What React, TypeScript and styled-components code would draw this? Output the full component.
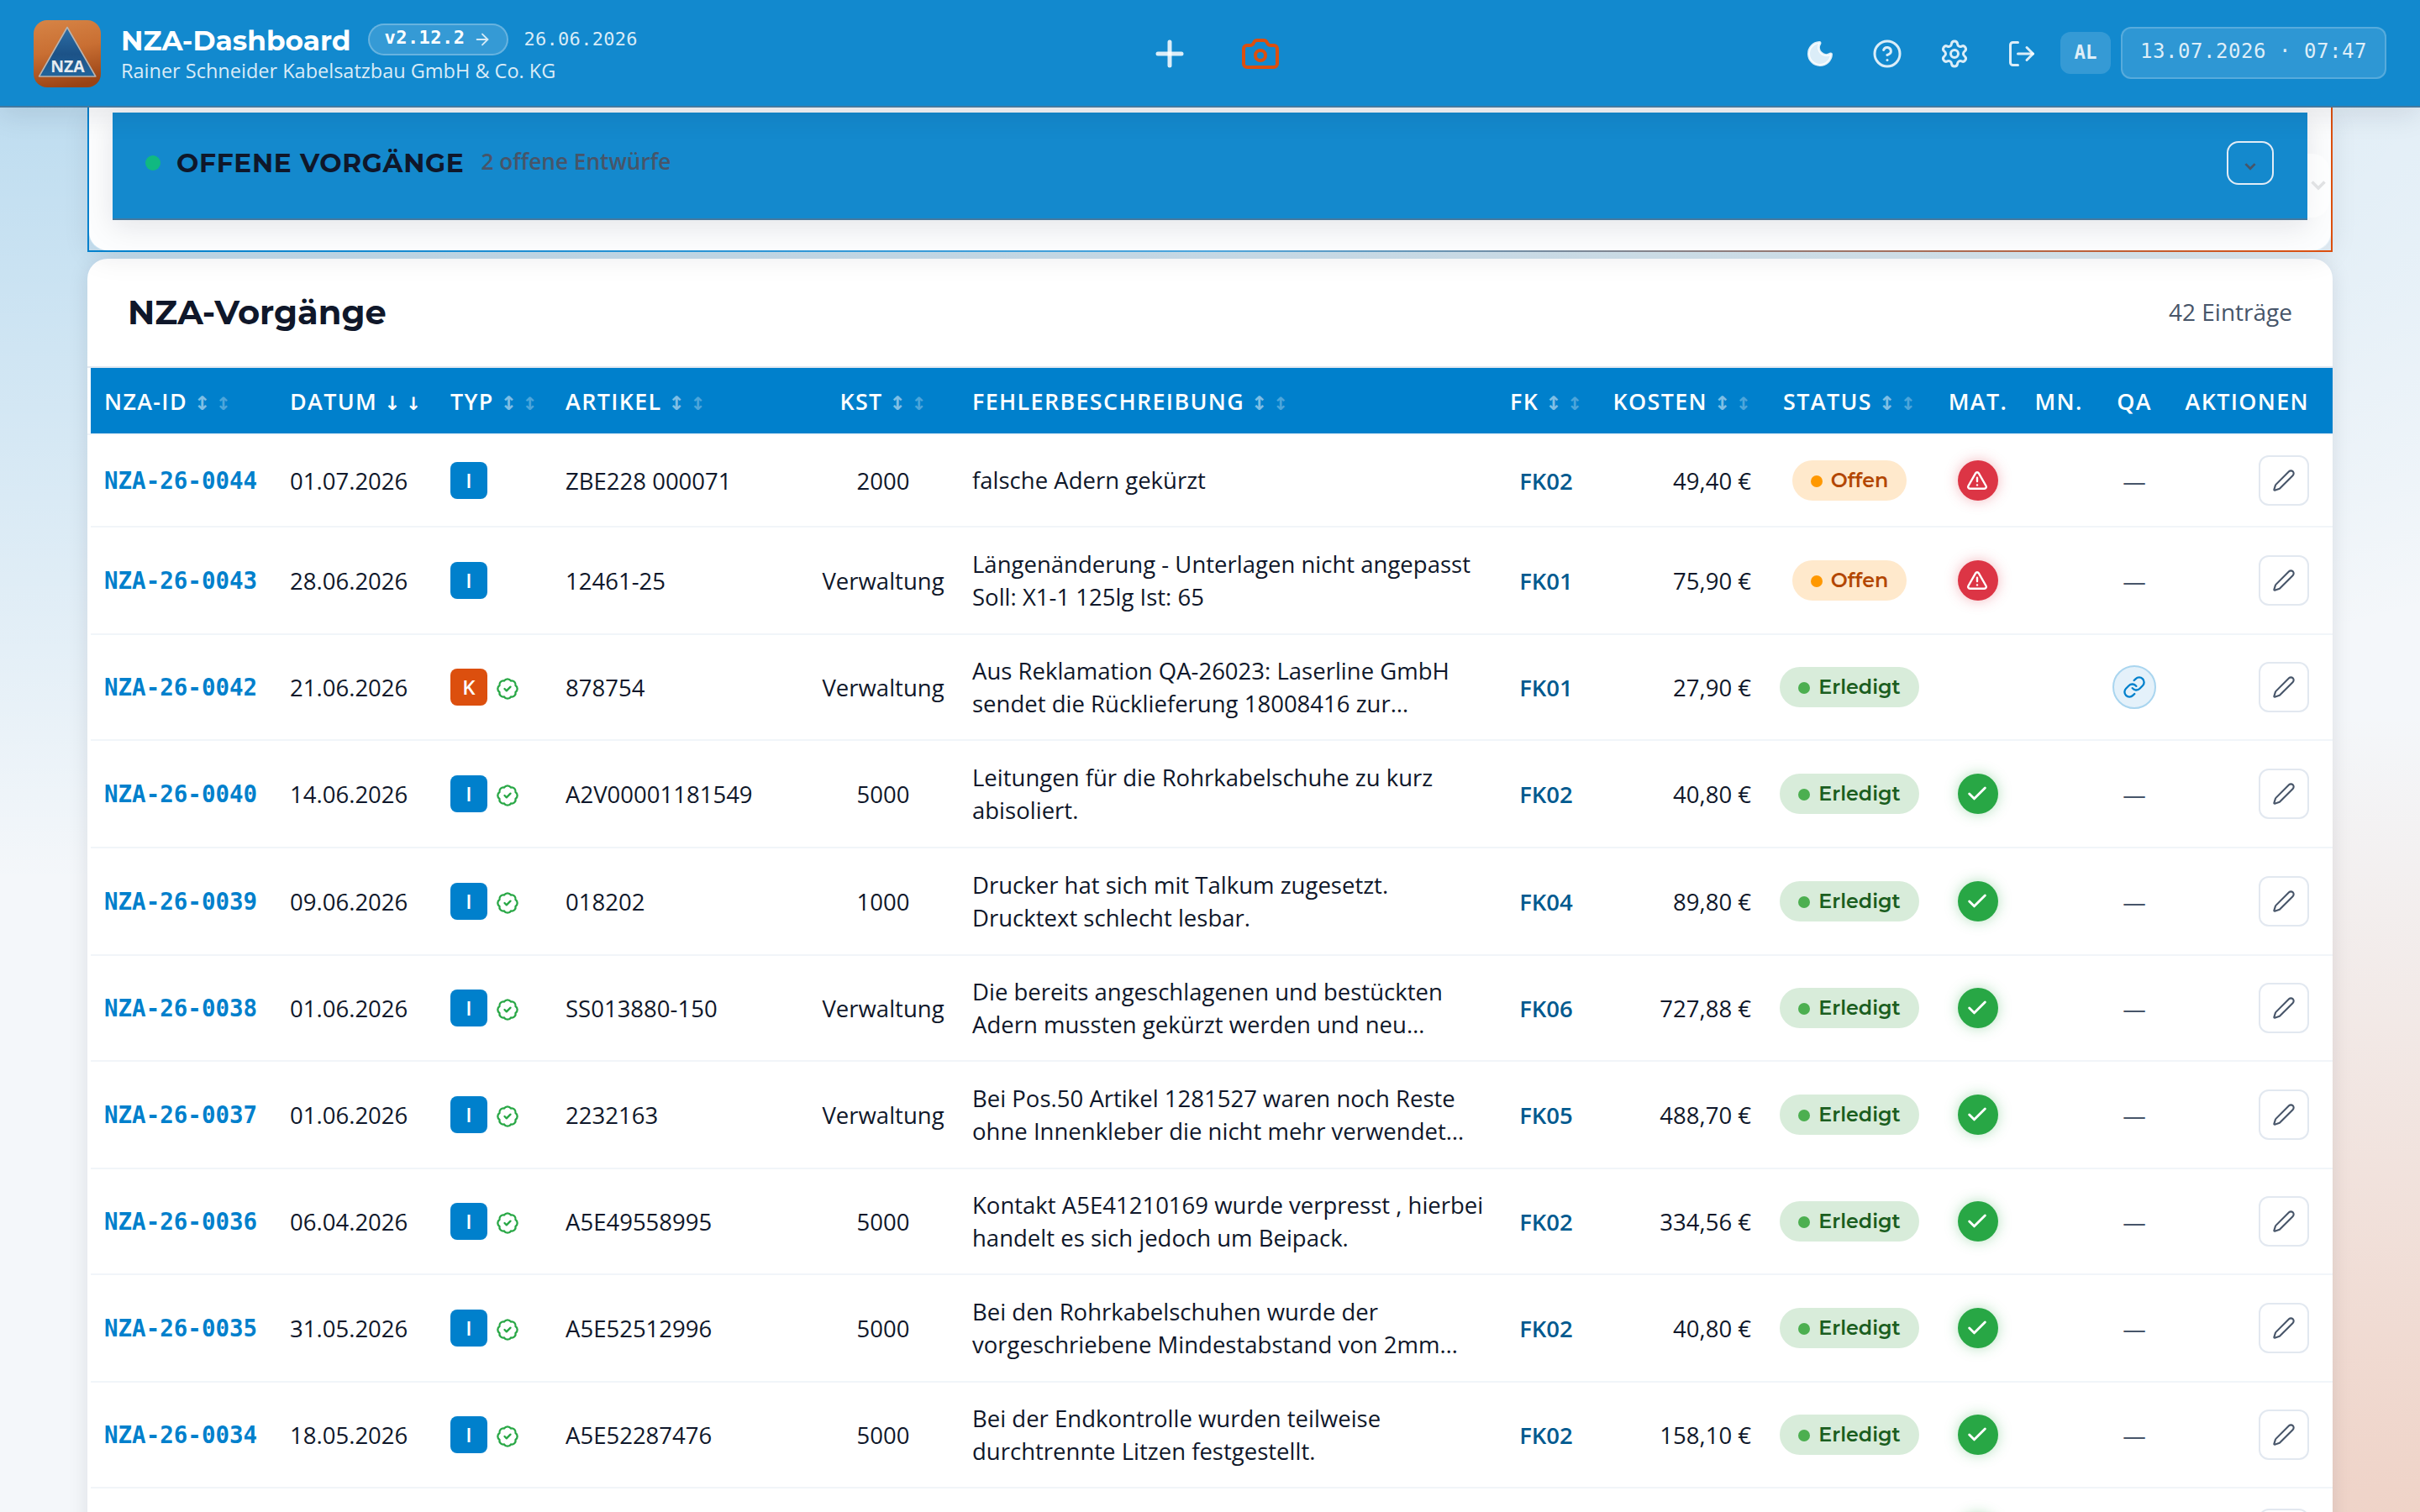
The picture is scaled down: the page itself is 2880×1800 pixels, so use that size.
import React from "react";
import styled, { createGlobalStyle, css } from "styled-components";
import {
  ArrowRight, BadgeCheck, Camera, Check, CircleHelp, LogOut, Moon,
  Pen, Plus, Settings, TriangleAlert, Link,
} from "lucide-react";

const display = `"Montserrat", "Open Sans", sans-serif`;
const body = `"Open Sans", "Noto Sans", sans-serif`;
const mono = `"DejaVu Sans Mono", monospace`;

const Global = createGlobalStyle`
  * { box-sizing: border-box; }
  html, body { margin: 0; height: 1800px; overflow: hidden; }
  body {
    font-family: ${body};
    color: #0f172a;
  }
`;

const Page = styled.div`
  height: 1800px;
  overflow: hidden;
  display: flex;
  flex-direction: column;
  background:
    radial-gradient(4000px 1050px at 0 0, rgba(0, 128, 204, 0.25), rgba(0, 128, 204, 0)),
    radial-gradient(2700px 950px at 100% 100%, rgba(220, 79, 14, 0.215), rgba(220, 79, 14, 0)),
    #f4f7fa;
`;

const TopBar = styled.header`
  flex: none;
  height: 128px;
  padding: 2px 40px 0;
  display: grid;
  grid-template-columns: 1fr auto 1fr;
  align-items: center;
  background: #1289ce;
  border-bottom: 2px solid #44799f;
  box-shadow: 0 8px 32px rgba(15, 23, 42, 0.1);
  position: relative;
  z-index: 2;
`;

const Brand = styled.div`
  display: flex;
  align-items: center;
  gap: 24px;
`;

const BrandText = styled.div`
  display: flex;
  flex-direction: column;
  padding-top: 3px;
`;

const TitleLine = styled.div`
  display: flex;
  align-items: center;
  height: 38px;
`;

const AppTitle = styled.h1`
  margin: 2px 0 0;
  font: 700 32.8px/38px ${display};
  color: #fff;
`;

const VersionPill = styled.span`
  display: flex;
  align-items: center;
  gap: 10px;
  height: 38px;
  margin-left: 20px;
  padding: 0 18px;
  border: 2px solid rgba(255, 255, 255, 0.25);
  border-radius: 19px;
  background: rgba(255, 255, 255, 0.15);
  font: 700 22px/30px ${mono};
  letter-spacing: 0.45px;
  color: #fff;
  svg { opacity: 0.8; }
  span { margin-top: -4px; }
`;

const ReleaseDate = styled.span`
  margin-left: 18px;
  font: 400 22px/30px ${mono};
  letter-spacing: 0.3px;
  color: rgba(255, 255, 255, 0.85);
`;

const Company = styled.div`
  margin-top: -1px;
  font-size: 23.5px;
  line-height: 38px;
  color: rgba(255, 255, 255, 0.85);
`;

const CenterActions = styled.div`
  display: flex;
  gap: 60px;
  margin-left: 12px;
  color: rgba(255, 255, 255, 0.85);
  svg { display: block; }
`;

const RightActions = styled.div`
  display: flex;
  justify-content: flex-end;
  align-items: center;
  color: rgba(255, 255, 255, 0.85);
`;

const IconButton = styled.span`
  width: 80px;
  display: flex;
  justify-content: center;
`;

const UserTag = styled.span`
  margin: 0 0 2px 6px;
  width: 60px;
  height: 50px;
  border-radius: 12px;
  background: rgba(255, 255, 255, 0.15);
  font: 700 22.4px/48px ${mono};
  text-align: center;
`;

const Clock = styled.span`
  margin: 0 0 2px 12px;
  width: 316px;
  height: 62px;
  border: 2px solid rgba(255, 255, 255, 0.2);
  border-radius: 12px;
  background: rgba(255, 255, 255, 0.12);
  font: 400 24px/55px ${mono};
  letter-spacing: 0.55px;
  text-align: center;
`;

const Main = styled.main`
  padding: 0 104px;
  display: flex;
  flex-direction: column;
  gap: 8px;
`;

const DraftFrame = styled.section`
  position: relative;
  z-index: 1;
  height: 172px;
  border: 2px solid;
  border-top: 0;
  border-image: linear-gradient(90deg, #0080cc, #4da6dd 50%, #dc4f0e) 1;
  border-radius: 0 0 24px 24px;
  background: #fcfdfe;
  background-clip: padding-box;
  display: flex;
  padding: 6px 0 0 28px;
  box-shadow: 0 8px 32px rgba(15, 23, 42, 0.08);
`;

const DraftBar = styled.div`
  width: 2612px;
  height: 128px;
  padding: 0 40px 0 39px;
  display: flex;
  align-items: center;
  background: #1489cd;
  border-bottom: 2px solid #44799f;
  box-shadow: 0 8px 32px rgba(15, 23, 42, 0.1);
`;

const Dot = styled.i`
  width: 18px;
  height: 18px;
  border-radius: 50%;
  background: #10b981;
  margin-top: -6px;
`;

const DraftTitle = styled.h2`
  margin: -7px 0 0 19px;
  font: 700 31.2px/36px ${display};
  letter-spacing: 0.7px;
  color: #0f172a;
`;

const DraftCount = styled.span`
  margin: -10px auto 0 20px;
  font-weight: 600;
  font-size: 26.2px;
  color: #475569;
`;

const Toggle = styled.button`
  width: 56px;
  height: 52px;
  padding: 8px 0 0;
  margin-top: -6px;
  border: 2px solid #e2ecf6;
  border-radius: 14px;
  background: none;
  color: #475569;
  display: flex;
  align-items: center;
  justify-content: center;
`;

const SideChevron = styled.span`
  width: 26px;
  height: 76px;
  margin-top: 49px;
  border-radius: 0 20px 20px 0;
  background: rgba(255, 255, 255, 0.5);
  color: #e0e1e3;
  display: flex;
  align-items: center;
  justify-content: center;
`;

const Card = styled.section`
  border-radius: 24px 24px 0 0;
  background: #fff;
  box-shadow: 0 4px 24px rgba(15, 23, 42, 0.1);
`;

const CardHead = styled.div`
  height: 130px;
  padding: 0 48px 2px 48px;
  display: flex;
  align-items: center;
  justify-content: space-between;
  border-bottom: 2px solid #e2e8f0;
`;

const CardTitle = styled.h2`
  margin: 2px 0 0;
  font: 700 40px/48px ${display};
`;

const CardCount = styled.span`
  font-size: 28px;
  color: #475569;
`;

const grid = css`
  display: grid;
  grid-template-columns: 221px 191px 137px 304px 180px 641px 116px 202px 202px 104px 88px 92px 190px;
  align-items: center;
  margin-left: 4px;
`;

const HeadRow = styled.div`
  ${grid}
  height: 78px;
  padding-top: 1px;
  background: #0080cc;
`;

type Align = "left" | "center" | "right";

const Cell = styled.div<{ $align?: Align }>`
  padding: 0 16px;
  display: flex;
  align-items: center;
  justify-content: ${(p) => (p.$align === "center" ? "center" : p.$align === "right" ? "flex-end" : "flex-start")};
  white-space: nowrap;
  &:last-child { padding-right: 28px; }
`;

const HeadCell = styled(Cell)`
  align-items: baseline;
  line-height: 40px;
  color: #fff;
  font-weight: 600;
  font-size: 26.9px;
  letter-spacing: 1.35px;
`;

const Sort = styled.span<{ $second?: boolean; $active?: boolean }>`
  margin-left: ${(p) => (p.$second ? 7 : 8)}px;
  width: ${(p) => (p.$second ? 18 : 19)}px;
  text-align: center;
  letter-spacing: 0;
  font-family: "DejaVu Sans", sans-serif;
  font-size: ${(p) => (p.$second ? 21.3 : 23)}px;
  line-height: 1;
  opacity: ${(p) => (p.$active ? 1 : p.$second ? 0.3 : 0.5)};
`;

const Row = styled.div<{ $h: number }>`
  ${grid}
  height: ${(p) => p.$h}px;
  border-bottom: 2px solid #f1f5f9;
  font-size: 27.52px;
`;

const Body = styled.div`
  border-top: 2px solid #f1f5f9;
`;

const Id = styled.span`
  margin-top: -1px;
  font: 700 27.5px/38px ${mono};
  color: #0080cc;
`;

const TypeBadge = styled.span<{ $k?: boolean }>`
  width: 44px;
  height: 44px;
  border-radius: 8px;
  background: ${(p) => (p.$k ? "#dc4f0e" : "#0080cc")};
  color: #fff;
  font: 600 24px/44px ${body};
  text-align: center;
`;

const Verified = styled(BadgeCheck)`
  margin: 4px 0 0 10px;
  color: #28a745;
`;

const Desc = styled.div`
  padding-top: 1px;
  line-height: 38.7px;
`;

const Code = styled.span`
  font-weight: 600;
  color: #005a8f;
`;

const Status = styled.span<{ $open?: boolean }>`
  height: 48px;
  padding: 0 22px;
  border-radius: 24px;
  display: flex;
  align-items: center;
  gap: 10px;
  font: 600 23.8px/44px ${display};
  color: ${(p) => (p.$open ? "#b34700" : "#1b5e20")};
  background: ${(p) => (p.$open ? "#ffe9cc" : "#d8ecda")};
  i {
    width: 14px;
    height: 14px;
    margin-top: 2px;
    border-radius: 50%;
    background: ${(p) => (p.$open ? "#ff9800" : "#4caf50")};
  }
`;

const Material = styled.span<{ $ok?: boolean }>`
  width: 48px;
  height: 48px;
  border-radius: 50%;
  display: flex;
  align-items: center;
  justify-content: center;
  padding-right: 2px;
  color: #fff;
  background: ${(p) => (p.$ok ? "#28a745" : "#dc3545")};
  box-shadow: 0 0 16px ${(p) => (p.$ok ? "rgba(40,167,69,.35)" : "rgba(220,53,69,.35)")};
`;

const QaLink = styled.span`
  width: 52px;
  height: 52px;
  border: 2px solid #a9d5ef;
  border-radius: 50%;
  background: #e4f1fa;
  color: #0080cc;
  display: flex;
  align-items: center;
  justify-content: center;
`;

const Dash = styled.span`
  color: #475569;
`;

const EditButton = styled.button`
  width: 60px;
  height: 60px;
  padding: 0;
  border: 2px solid #e2e8f0;
  border-radius: 12px;
  background: #fff;
  color: #475569;
  display: flex;
  align-items: center;
  justify-content: center;
`;

const Caret = ({ w, h }: { w: number; h: number }) => (
  <svg width={w} height={h} viewBox="0 0 18 12" fill="none" stroke="currentColor" strokeWidth="3.600">
    <path d="M1.500 1.500 L9 9 L16.500 1.500" />
  </svg>
);

const Logo = () => (
  <svg width="80" height="80" viewBox="0 0 80 80">
    <defs>
      <linearGradient id="copper" x1="0.3" y1="0" x2="0.5" y2="1">
        <stop offset="0" stopColor="#d58244" />
        <stop offset="0.45" stopColor="#c96f33" />
        <stop offset="1" stopColor="#994214" />
      </linearGradient>
      <linearGradient id="steel" x1="0" y1="0" x2="0" y2="1">
        <stop offset="0" stopColor="#2c6ea6" />
        <stop offset="0.55" stopColor="#1c5287" />
        <stop offset="1" stopColor="#22659c" />
      </linearGradient>
    </defs>
    <rect width="80" height="80" rx="16" fill="url(#copper)" />
    <path d="M40 8.500 L73.800 67 H6.500 Z" fill="url(#steel)" stroke="#b9b4b0" strokeWidth="1.600" strokeLinejoin="round" />
    <text x="40.500" y="62" textAnchor="middle" fontFamily="Open Sans, sans-serif" fontWeight="700" fontSize="19.500" fill="#e6ebf0">NZA</text>
  </svg>
);

type Entry = {
  h: number; id: string; date: string; k?: boolean; ok?: boolean; article: string; kst: string;
  desc: string[]; fk: string; cost: string; open?: boolean; mat: "warn" | "ok" | null; qa?: boolean;
};

const rows: Entry[] = [
  { h: 110, id: "0044", date: "01.07.2026", article: "ZBE228 000071", kst: "2000", desc: ["falsche Adern gekürzt"], fk: "FK02", cost: "49,40 €", open: true, mat: "warn" },
  { h: 128, id: "0043", date: "28.06.2026", article: "12461-25", kst: "Verwaltung", desc: ["Längenänderung - Unterlagen nicht angepasst", "Soll: X1-1 125lg Ist: 65"], fk: "FK01", cost: "75,90 €", open: true, mat: "warn" },
  { h: 126, id: "0042", date: "21.06.2026", k: true, ok: true, article: "878754", kst: "Verwaltung", desc: ["Aus Reklamation QA-26023: Laserline GmbH", "sendet die Rücklieferung 18008416 zur…"], fk: "FK01", cost: "27,90 €", mat: null, qa: true },
  { h: 128, id: "0040", date: "14.06.2026", ok: true, article: "A2V00001181549", kst: "5000", desc: ["Leitungen für die Rohrkabelschuhe zu kurz", "abisoliert."], fk: "FK02", cost: "40,80 €", mat: "ok" },
  { h: 128, id: "0039", date: "09.06.2026", ok: true, article: "018202", kst: "1000", desc: ["Drucker hat sich mit Talkum zugesetzt.", "Drucktext schlecht lesbar."], fk: "FK04", cost: "89,80 €", mat: "ok" },
  { h: 126, id: "0038", date: "01.06.2026", ok: true, article: "SS013880-150", kst: "Verwaltung", desc: ["Die bereits angeschlagenen und bestückten", "Adern mussten gekürzt werden und neu…"], fk: "FK06", cost: "727,88 €", mat: "ok" },
  { h: 128, id: "0037", date: "01.06.2026", ok: true, article: "2232163", kst: "Verwaltung", desc: ["Bei Pos.50 Artikel 1281527 waren noch Reste", "ohne Innenkleber die nicht mehr verwendet…"], fk: "FK05", cost: "488,70 €", mat: "ok" },
  { h: 126, id: "0036", date: "06.04.2026", ok: true, article: "A5E49558995", kst: "5000", desc: ["Kontakt A5E41210169 wurde verpresst , hierbei", "handelt es sich jedoch um Beipack."], fk: "FK02", cost: "334,56 €", mat: "ok" },
  { h: 128, id: "0035", date: "31.05.2026", ok: true, article: "A5E52512996", kst: "5000", desc: ["Bei den Rohrkabelschuhen wurde der", "vorgeschriebene Mindestabstand von 2mm…"], fk: "FK02", cost: "40,80 €", mat: "ok" },
  { h: 126, id: "0034", date: "18.05.2026", ok: true, article: "A5E52287476", kst: "5000", desc: ["Bei der Endkontrolle wurden teilweise", "durchtrennte Litzen festgestellt."], fk: "FK02", cost: "158,10 €", mat: "ok" },
  { h: 110, id: "", date: "", article: "", kst: "", desc: [""], fk: "", cost: "", mat: "ok" },
];

type Column = { label: string; align?: Align; sort?: "none" | "down" };

const columns: Column[] = [
  { label: "NZA-ID", sort: "none" },
  { label: "DATUM", sort: "down" },
  { label: "TYP", sort: "none" },
  { label: "ARTIKEL", sort: "none" },
  { label: "KST", align: "center", sort: "none" },
  { label: "FEHLERBESCHREIBUNG", sort: "none" },
  { label: "FK", align: "center", sort: "none" },
  { label: "KOSTEN", align: "right", sort: "none" },
  { label: "STATUS", align: "center", sort: "none" },
  { label: "MAT.", align: "center" },
  { label: "MN.", align: "center" },
  { label: "QA", align: "center" },
  { label: "AKTIONEN", align: "right" },
];

function EntryRow({ r }: { r: Entry }) {
  return (
    <Row $h={r.h}>
      <Cell>{r.id && <Id>NZA-26-{r.id}</Id>}</Cell>
      <Cell>{r.date}</Cell>
      <Cell>
        {r.id && <TypeBadge $k={r.k}>{r.k ? "K" : "I"}</TypeBadge>}
        {r.ok && <Verified size={28} />}
      </Cell>
      <Cell>{r.article}</Cell>
      <Cell $align="center">{r.kst}</Cell>
      <Cell>
        <Desc>{r.desc.map((line) => <div key={line}>{line}</div>)}</Desc>
      </Cell>
      <Cell $align="center"><Code>{r.fk}</Code></Cell>
      <Cell $align="right">{r.cost}</Cell>
      <Cell $align="center">
        {r.id && <Status $open={r.open}><i />{r.open ? "Offen" : "Erledigt"}</Status>}
      </Cell>
      <Cell $align="center">
        {r.mat && (
          <Material $ok={r.mat === "ok"}>
            {r.mat === "ok" ? <Check size={28} strokeWidth={2.5} /> : <TriangleAlert size={26} strokeWidth={2.2} />}
          </Material>
        )}
      </Cell>
      <Cell />
      <Cell $align="center">{r.qa ? <QaLink><Link size={28} /></QaLink> : r.id && <Dash>—</Dash>}</Cell>
      <Cell $align="right"><EditButton aria-label="Bearbeiten"><Pen size={28} strokeWidth={1.8} /></EditButton></Cell>
    </Row>
  );
}

export default function App() {
  return (
    <Page>
      <Global />
      <TopBar>
        <Brand>
          <Logo />
          <BrandText>
            <TitleLine>
              <AppTitle>NZA-Dashboard</AppTitle>
              <VersionPill><span>v2.12.2</span><ArrowRight size={22} /></VersionPill>
              <ReleaseDate>26.06.2026</ReleaseDate>
            </TitleLine>
            <Company>Rainer Schneider Kabelsatzbau GmbH &amp; Co. KG</Company>
          </BrandText>
        </Brand>
        <CenterActions>
          <Plus size={48} strokeWidth={2.5} />
          <Camera size={48} color="#dc4f0e" />
        </CenterActions>
        <RightActions>
          <IconButton><Moon size={36} fill="currentColor" /></IconButton>
          <IconButton><CircleHelp size={36} /></IconButton>
          <IconButton><Settings size={36} /></IconButton>
          <IconButton><LogOut size={36} /></IconButton>
          <UserTag>AL</UserTag>
          <Clock>13.07.2026 · 07:47</Clock>
        </RightActions>
      </TopBar>
      <Main>
        <DraftFrame>
          <DraftBar>
            <Dot />
            <DraftTitle>OFFENE VORGÄNGE</DraftTitle>
            <DraftCount>2 offene Entwürfe</DraftCount>
            <Toggle aria-label="Aufklappen"><Caret w={14} h={9} /></Toggle>
          </DraftBar>
          <SideChevron><Caret w={18} h={12} /></SideChevron>
        </DraftFrame>
        <Card>
          <CardHead>
            <CardTitle>NZA-Vorgänge</CardTitle>
            <CardCount>42 Einträge</CardCount>
          </CardHead>
          <HeadRow>
            {columns.map((c) => (
              <HeadCell key={c.label} $align={c.align}>
                {c.label}
                {c.sort && <Sort $active={c.sort === "down"}>{c.sort === "down" ? "↓" : "↕"}</Sort>}
                {c.sort && <Sort $second $active={c.sort === "down"}>{c.sort === "down" ? "↓" : "↕"}</Sort>}
              </HeadCell>
            ))}
          </HeadRow>
          <Body>
            {rows.map((r, i) => <EntryRow key={i} r={r} />)}
          </Body>
        </Card>
      </Main>
    </Page>
  );
}
